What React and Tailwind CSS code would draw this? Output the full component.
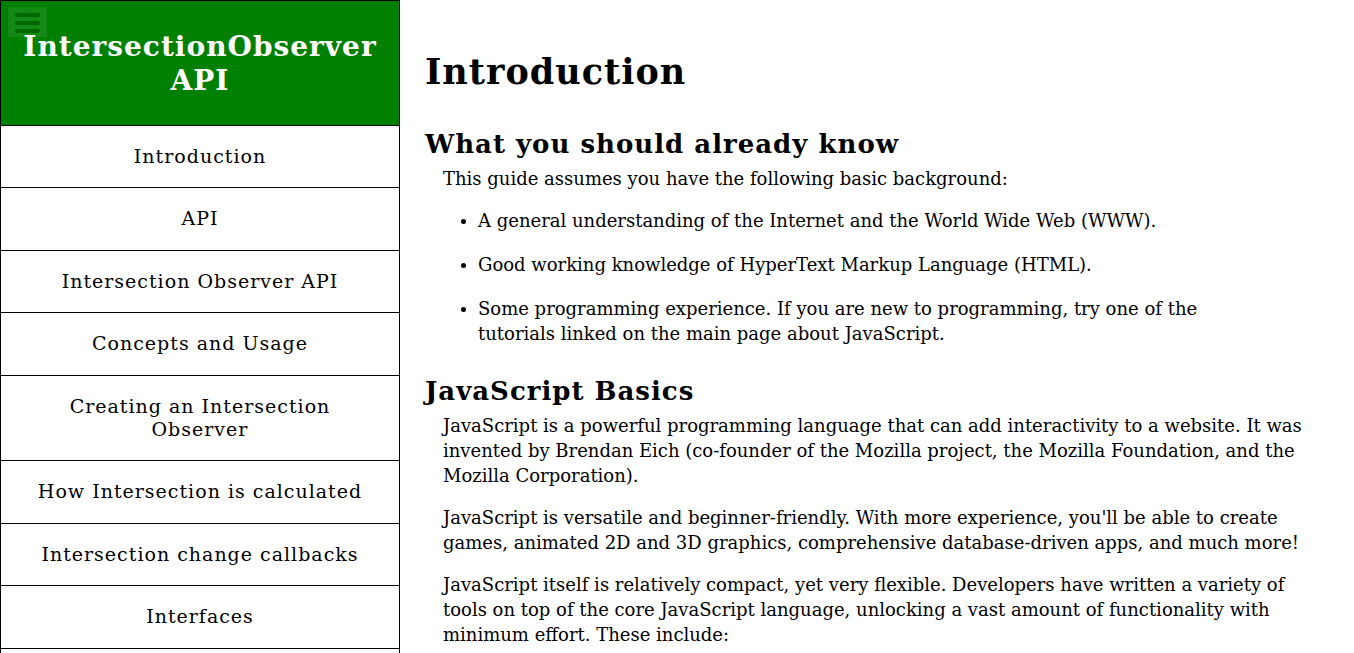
const navItems = [
  "Introduction",
  "API",
  "Intersection Observer API",
  "Concepts and Usage",
  "Creating an Intersection Observer",
  "How Intersection is calculated",
  "Intersection change callbacks",
  "Interfaces",
];

const background = [
  "A general understanding of the Internet and the World Wide Web (WWW).",
  "Good working knowledge of HyperText Markup Language (HTML).",
  "Some programming experience. If you are new to programming, try one of the tutorials linked on the main page about JavaScript.",
];

const basics = [
  "JavaScript is a powerful programming language that can add interactivity to a website. It was invented by Brendan Eich (co-founder of the Mozilla project, the Mozilla Foundation, and the Mozilla Corporation).",
  "JavaScript is versatile and beginner-friendly. With more experience, you'll be able to create games, animated 2D and 3D graphics, comprehensive database-driven apps, and much more!",
  "JavaScript itself is relatively compact, yet very flexible. Developers have written a variety of tools on top of the core JavaScript language, unlocking a vast amount of functionality with minimum effort. These include:",
];

function MenuButton() {
  return (
    <button
      type="button"
      aria-label="Toggle navigation"
      className="absolute left-[7px] top-[6px] flex h-[30px] w-[39px] flex-col items-center gap-1 bg-[#148a14] pt-[6px]"
    >
      <span className="h-1 w-[25px] rounded-full bg-[#006600]" />
      <span className="h-1 w-[25px] rounded-full bg-[#006600]" />
      <span className="h-1 w-[25px] rounded-full bg-[#006600]" />
    </button>
  );
}

function Sidebar() {
  return (
    <nav className="w-[400px] shrink-0 border border-b-0 border-black text-center">
      <header className="relative border-b border-black bg-[#008000] px-5 pt-[29px] pb-[27px]">
        <MenuButton />
        <h1 className="relative text-[28px] leading-[34px] font-bold tracking-[1px] text-white">
          IntersectionObserver API
        </h1>
      </header>
      <ul>
        {navItems.map((item) => (
          <li key={item} className="border-b border-black even:pb-px">
            <a href="#top" className="block px-5 py-[19px] text-[19px] leading-[23px] tracking-[1px]">
              {item}
            </a>
          </li>
        ))}
      </ul>
    </nav>
  );
}

function Section({ title, children }) {
  return (
    <section className="mt-[29px]">
      <h2 className="text-[26px] leading-[32px] font-bold tracking-[1px]">{title}</h2>
      <div className="mx-[18px] mt-[6px] flex flex-col gap-[17px] text-[18px] leading-[25px]">{children}</div>
    </section>
  );
}

export default function App() {
  return (
    <div
      id="top"
      className="flex min-h-screen bg-white font-['DejaVu_Serif','Liberation_Serif',serif] text-black"
    >
      <Sidebar />
      <main className="min-w-0 flex-1 px-[25px] pt-[51px]">
        <h1 className="mb-[35px] text-[35px] leading-[42px] font-bold tracking-[1px]">Introduction</h1>
        <Section title="What you should already know">
          <p>This guide assumes you have the following basic background:</p>
          <ul className="mr-[60px] flex list-disc flex-col gap-[19px] pl-[35px] text-[16px] leading-[25px]">
            {background.map((item) => (
              <li key={item}>
                <p className="text-[18px] leading-[25px]">{item}</p>
              </li>
            ))}
          </ul>
        </Section>
        <Section title="JavaScript Basics">
          {basics.map((text) => (
            <p key={text}>{text}</p>
          ))}
        </Section>
      </main>
    </div>
  );
}
